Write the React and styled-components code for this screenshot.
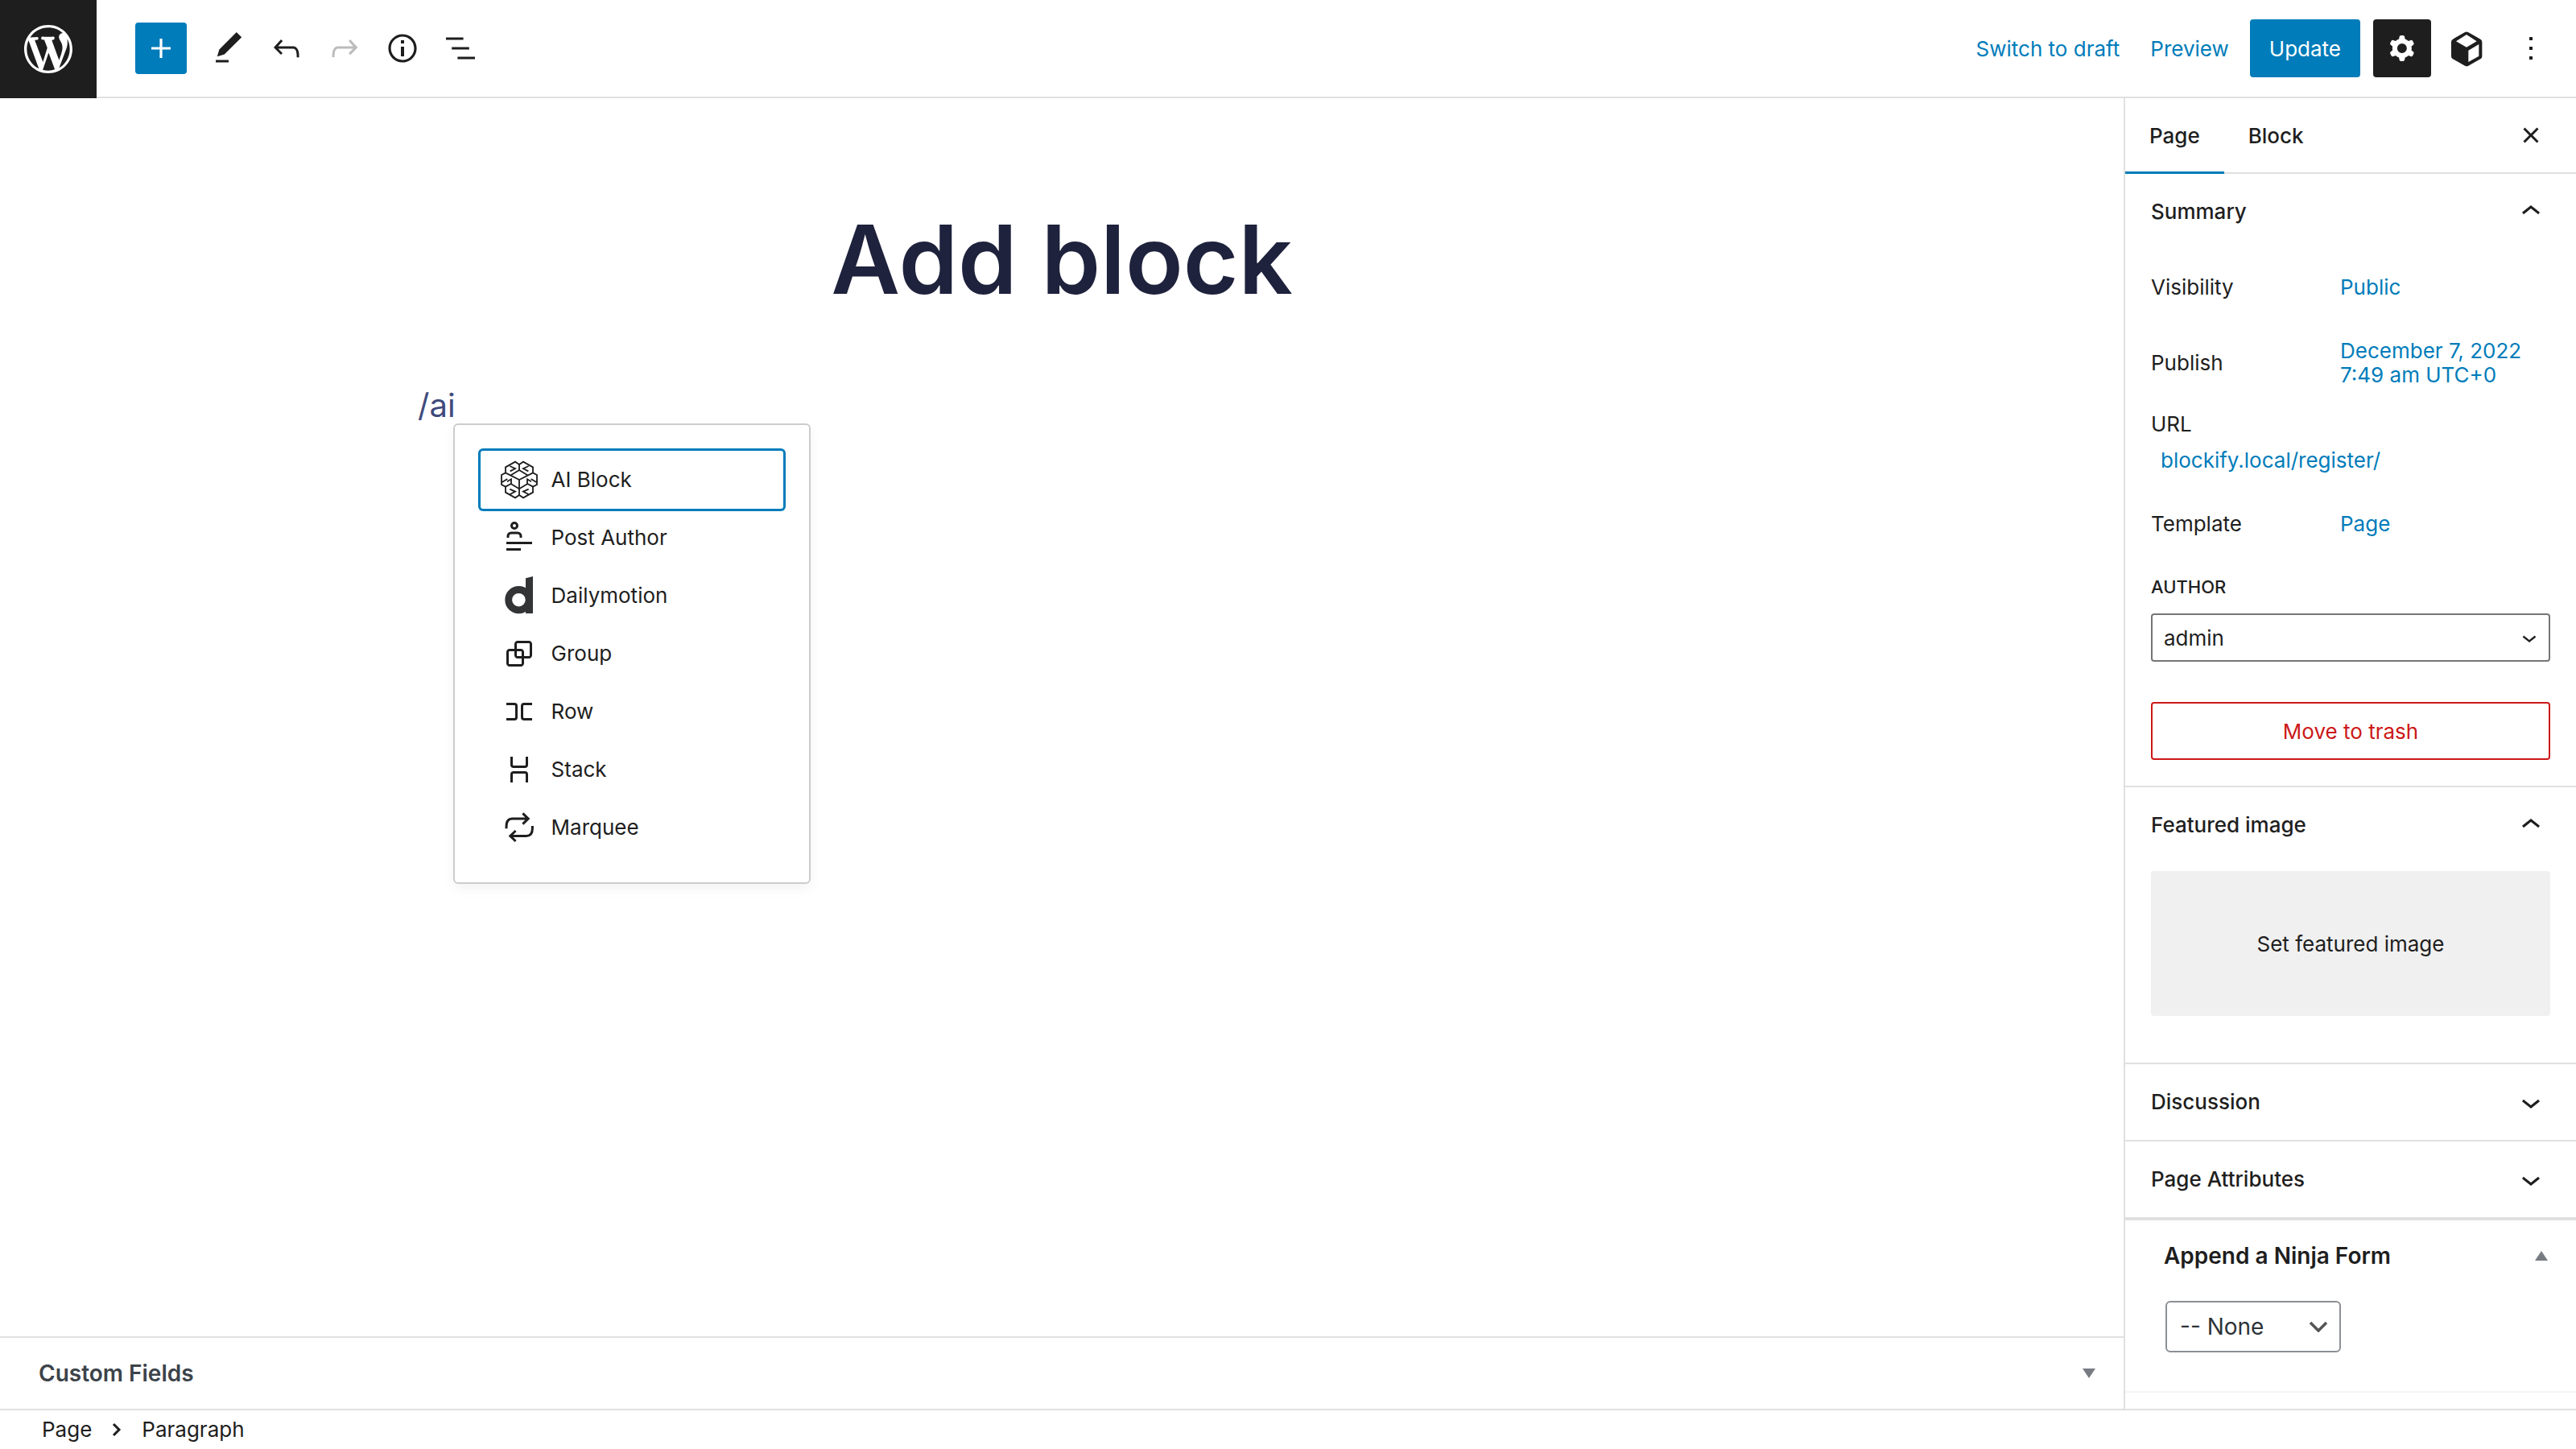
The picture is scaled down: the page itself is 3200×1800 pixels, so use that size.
import React from "react";
import styled, { createGlobalStyle } from "styled-components";

const blue = "#007cba";
const ink = "#1e1e1e";
const line = "#e0e0e0";

const GlobalStyle = createGlobalStyle`
  *, *::before, *::after { box-sizing: border-box; }
  body {
    margin: 0;
    background: #fff;
    color: ${ink};
    font: 400 26px/30px Inter, "Liberation Sans", sans-serif;
  }
  button, select { font: inherit; color: inherit; margin: 0; }
  button { border: 0; padding: 0; background: none; cursor: pointer; }
  a { color: ${blue}; text-decoration: none; }
  h1, h2, p, ul { margin: 0; padding: 0; }
  svg { display: block; flex: none; fill: currentColor; }
`;

const Page = styled.div`
  display: flex;
  flex-direction: column;
  min-height: 100vh;
`;

const Header = styled.header`
  display: flex;
  align-items: center;
  justify-content: space-between;
  height: 122px;
  padding-right: 20px;
  border-bottom: 2px solid ${line};
`;

const Group = styled.div`
  display: flex;
  align-items: center;
  gap: ${(p) => p.$gap || 0}px;
`;

const SiteLink = styled.a`
  display: flex;
  align-items: center;
  justify-content: center;
  width: 120px;
  height: 122px;
  margin-bottom: -2px;
  margin-right: 48px;
  background: ${ink};
  color: #fff;
`;

const ToolButton = styled.button`
  display: flex;
  align-items: center;
  justify-content: center;
  width: 72px;
  height: 72px;
  border-radius: 4px;
  background: ${(p) => (p.$pressed ? ink : "transparent")};
  color: ${(p) => (p.$pressed ? "#fff" : p.disabled ? "#bcbcbc" : ink)};
`;

const AddButton = styled.button`
  display: flex;
  align-items: center;
  justify-content: center;
  width: 64px;
  height: 64px;
  margin-right: 16px;
  border-radius: 4px;
  background: ${blue};
  color: #fff;
`;

const TextButton = styled.button`
  height: 72px;
  padding-top: 2px;
  color: ${blue};
`;

const UpdateButton = styled.button`
  height: 72px;
  margin: 0 8px 0 -12px;
  padding: 2px 24px 0;
  border-radius: 4px;
  background: ${blue};
  color: #fff;
`;

const Body = styled.div`
  flex: 1;
  display: grid;
  grid-template-columns: minmax(0, 1fr) 562px;
`;

const Main = styled.main`
  display: flex;
  flex-direction: column;
`;

const Canvas = styled.div`
  flex: 1;
  width: 100%;
  max-width: 1600px;
  margin: 0 auto;
  padding-top: 128px;
`;

const Title = styled.h1`
  margin-bottom: 78px;
  color: #1e223c;
  font-size: 118px;
  font-weight: 600;
  line-height: 144px;
  text-align: center;
`;

const Paragraph = styled.p`
  color: #3f4a7d;
  font-size: 40px;
  line-height: 64px;
`;

const Caret = styled.span`
  position: relative;
  display: inline-block;
`;

const Menu = styled.ul`
  position: absolute;
  top: 54px;
  left: 100%;
  width: 444px;
  margin-left: -3px;
  padding: 32px;
  border: 2px solid #ccc;
  border-radius: 6px;
  background: #fff;
  box-shadow: 0 6px 16px rgba(0, 0, 0, 0.05);
  color: ${ink};
  font-size: 26px;
  line-height: 30px;
  list-style: none;
`;

const MenuButton = styled.button`
  display: flex;
  align-items: center;
  gap: 16px;
  width: 100%;
  height: 72px;
  padding: 0 24px;
  border-radius: 3px;
  box-shadow: ${(p) => (p.$selected ? `0 0 0 3px ${blue}` : "none")};
`;

const BottomBox = styled.section`
  border-top: 2px solid ${line};
`;

const BoxHeader = styled.button`
  display: flex;
  align-items: center;
  justify-content: space-between;
  width: 100%;
  height: 88px;
  padding: 0 35px 0 48px;
  color: ${(p) => (p.$muted ? "#3c434a" : ink)};
  font-size: 28px;
  font-weight: 600;
  line-height: 34px;

  svg { color: #787c82; }
`;

const Sidebar = styled.aside`
  border-left: 2px solid ${line};
`;

const Tabs = styled.div`
  display: flex;
  height: 94px;
  padding-right: 20px;
  border-bottom: 2px solid ${line};
`;

const Tab = styled.button`
  height: 94px;
  padding: 0 30px;
  font-weight: 500;
  box-shadow: ${(p) => (p.$active ? `inset 0 -3px 0 ${blue}` : "none")};
`;

const CloseButton = styled.button`
  display: flex;
  align-items: center;
  justify-content: center;
  width: 72px;
  margin-left: auto;
`;

const Panel = styled.section`
  & + & { border-top: 2px solid ${line}; }
`;

const PanelHeader = styled.button`
  display: flex;
  align-items: center;
  justify-content: space-between;
  width: 100%;
  height: 94px;
  padding: 0 32px;
  font-weight: 500;
`;

const PanelBody = styled.div`
  padding: 10px 32px ${(p) => p.$bottom}px;
`;

const Row = styled.div`
  display: grid;
  grid-template-columns: 235px 1fr;
  align-items: center;
  min-height: 72px;
  padding: 13px 0 11px;
  margin-bottom: ${(p) => p.$after || 0}px;
`;

const LinkButton = styled.button`
  color: ${blue};
  text-align: left;
  line-height: 30px;
`;

const UrlRow = styled.div`
  margin: 20px 0 12px;
`;

const UrlLink = styled.a`
  display: block;
  padding: 15px 12px;
`;

const Label = styled.label`
  display: block;
  margin-bottom: 20px;
  font-size: 22px;
  font-weight: 500;
  line-height: 26px;
  text-transform: uppercase;
`;

const SelectBox = styled.div`
  position: relative;
  width: ${(p) => p.$width || "100%"};

  svg {
    position: absolute;
    top: 50%;
    right: ${(p) => p.$inset}px;
    transform: translateY(-50%);
    pointer-events: none;
  }
`;

const AuthorSelect = styled.select`
  appearance: none;
  width: 100%;
  height: 60px;
  padding: 2px 14px 0;
  border: 2px solid #757575;
  border-radius: 4px;
  background: #fff;
`;

const FormSelect = styled.select`
  appearance: none;
  width: 100%;
  height: 64px;
  padding: 0 16px;
  border: 2px solid #8c8f94;
  border-radius: 6px;
  background: #fff;
  color: #2c3338;
  font-size: 28px;
`;

const TrashButton = styled.button`
  width: 100%;
  height: 72px;
  margin-top: 50px;
  padding-top: 2px;
  border: 2px solid #cc1818;
  border-radius: 4px;
  color: #cc1818;
`;

const FeaturedButton = styled.button`
  width: 100%;
  height: 180px;
  padding-top: 2px;
  border-radius: 4px;
  background: #f0f0f0;
`;

const SideBox = styled.section`
  border-top: 4px solid ${line};
`;

const SideBoxBody = styled.div`
  padding: 12px 50px 48px;
  border-bottom: 2px solid #f5f5f5;
`;

const Footer = styled.footer`
  display: flex;
  align-items: center;
  gap: 25px;
  height: 50px;
  padding-left: 52px;
  border-top: 2px solid ${line};
`;

function Icon({ d, size = 48, viewBox = "0 0 24 24", rule, children }) {
  return (
    <svg width={size} height={size} viewBox={viewBox} aria-hidden="true">
      {d ? <path d={d} fillRule={rule} clipRule={rule} /> : children}
    </svg>
  );
}

const paths = {
  wordpress:
    "M20 10c0-5.51-4.49-10-10-10C4.48 0 0 4.49 0 10c0 5.52 4.48 10 10 10 5.51 0 10-4.48 10-10zM7.78 15.37L4.37 6.22c.55-.02 1.17-.08 1.17-.08.5-.06.44-1.13-.06-1.11 0 0-1.45.11-2.37.11-.18 0-.37 0-.58-.01C4.12 2.69 6.87 1.11 10 1.11c2.33 0 4.45.87 6.05 2.34-.68-.11-1.65.39-1.65 1.58 0 .74.45 1.36.9 2.1.35.61.55 1.36.55 2.46 0 1.49-1.4 5-1.4 5l-3.03-8.37c.54-.02.82-.17.82-.17.5-.05.44-1.25-.06-1.22 0 0-1.44.12-2.38.12-.87 0-2.33-.12-2.33-.12-.5-.03-.56 1.2-.06 1.22l.92.08 1.26 3.41zM17.41 10c.24-.64.74-1.87.43-4.25.7 1.29 1.05 2.71 1.05 4.25 0 3.29-1.73 6.24-4.4 7.78.97-2.59 1.94-5.2 2.92-7.78zM6.1 18.09C3.12 16.65 1.11 13.53 1.11 10c0-1.3.23-2.48.72-3.59C3.25 10.3 4.67 14.2 6.1 18.09zm4.03-6.63l2.58 6.98c-.86.29-1.76.45-2.71.45-.79 0-1.57-.11-2.29-.33.81-2.38 1.62-4.74 2.42-7.1z",
  plus: "M18 11.2h-5.2V6h-1.6v5.2H6v1.6h5.2V18h1.6v-5.2H18z",
  edit: "M20.1 5.1L16.9 2 6.2 12.7l-1.3 4.4 4.5-1.3L20.1 5.1zM4 20.8h8v-1.5H4v1.5z",
  undo: "M18.3 11.7c-.6-.6-1.4-.9-2.3-.9H6.7l2.9-3.3-1.1-1-4.5 5L8.5 16l1-1-2.7-2.7H16c.5 0 .9.2 1.3.5 1 1 1 3.4 1 4.5v.3h1.5v-.2c0-1.5 0-4.3-1.5-5.7z",
  redo: "M15.6 6.5l-1.1 1 2.9 3.3H8c-.9 0-1.7.3-2.3.9-1.4 1.5-1.4 4.2-1.4 5.6v.2h1.5v-.3c0-1.1 0-3.5 1-4.5.3-.3.7-.5 1.3-.5h9.2L14.5 15l1.1 1.1 4.6-4.6-4.6-5z",
  info: "M12 3.2c-4.8 0-8.8 3.9-8.8 8.8 0 4.8 3.9 8.8 8.8 8.8 4.8 0 8.8-3.9 8.8-8.8 0-4.8-4-8.8-8.8-8.8zm0 16c-4 0-7.2-3.3-7.2-7.2C4.8 8 8 4.8 12 4.8s7.2 3.3 7.2 7.2c0 4-3.2 7.2-7.2 7.2zM11 17h2v-6h-2v6zm0-8h2V7h-2v2z",
  listView:
    "M13.8 5.2H3v1.5h10.8V5.2zm-3.6 12v1.5H21v-1.5H10.2zm7.2-6H6.6v1.5h10.8v-1.5z",
  cog: "M10.289 4.836A1 1 0 0111.275 4h1.306a1 1 0 01.987.836l.244 1.466c.787.26 1.503.679 2.108 1.218l1.393-.522a1 1 0 011.216.437l.653 1.13a1 1 0 01-.23 1.273l-1.148.944a6.025 6.025 0 010 2.435l1.149.946a1 1 0 01.23 1.272l-.653 1.13a1 1 0 01-1.216.437l-1.394-.522c-.605.54-1.32.958-2.108 1.218l-.244 1.466a1 1 0 01-.987.836h-1.306a1 1 0 01-.986-.836l-.244-1.466a5.995 5.995 0 01-2.108-1.218l-1.394.522a1 1 0 01-1.217-.436l-.653-1.131a1 1 0 01.23-1.272l1.149-.946a6.026 6.026 0 010-2.435l-1.148-.944a1 1 0 01-.23-1.272l.653-1.131a1 1 0 011.217-.437l1.393.522a5.994 5.994 0 012.108-1.218l.244-1.466zM14.929 12a3 3 0 11-6 0 3 3 0 016 0z",
  more: "M13 19h-2v-2h2v2zm0-6h-2v-2h2v2zm0-6h-2V5h2v2z",
  close:
    "M12 13.06l3.712 3.713 1.061-1.06L13.061 12l3.712-3.712-1.06-1.06L12 10.938 8.288 7.227l-1.061 1.06L10.939 12l-3.712 3.712 1.06 1.061L12 13.061z",
  up: "M6.5 12.4L12 8l5.5 4.4-.9 1.2L12 10l-4.5 3.6-1-1.2z",
  down: "M17.5 11.6L12 16l-5.5-4.4.9-1.2L12 14l4.5-3.6 1 1.2z",
  author:
    "M10 4.5a1 1 0 11-2 0 1 1 0 012 0zm1.5 0a2.5 2.5 0 11-5 0 2.5 2.5 0 015 0zm2.25 7.5v-1A2.75 2.75 0 0011 8.25H7A2.75 2.75 0 004.25 11v1h1.5v-1c0-.69.56-1.25 1.25-1.25h4c.69 0 1.25.56 1.25 1.25v1h1.5zM4 20h9v-1.5H4V20zm16-4H4v-1.5h16V16z",
  group:
    "M18 4h-7c-1.1 0-2 .9-2 2v3H6c-1.1 0-2 .9-2 2v7c0 1.1.9 2 2 2h7c1.1 0 2-.9 2-2v-3h3c1.1 0 2-.9 2-2V6c0-1.1-.9-2-2-2zm-4.5 14c0 .3-.2.5-.5.5H6c-.3 0-.5-.2-.5-.5v-7c0-.3.2-.5.5-.5h3V13c0 1.1.9 2 2 2h2.5v3zm0-4.5H11c-.3 0-.5-.2-.5-.5v-2.5H13c.3 0 .5.2.5.5v2.5zm5-.5c0 .3-.2.5-.5.5h-3V11c0-1.1-.9-2-2-2h-2.5V6c0-.3.2-.5.5-.5h7c.3 0 .5.2.5.5v7z",
  row: "M4 6.5h5a2 2 0 0 1 2 2v7a2 2 0 0 1-2 2H4V16h5a.5.5 0 0 0 .5-.5v-7A.5.5 0 0 0 9 8H4V6.5Zm16 0h-5a2 2 0 0 0-2 2v7a2 2 0 0 0 2 2h5V16h-5a.5.5 0 0 1-.5-.5v-7A.5.5 0 0 1 15 8h5V6.5Z",
  stack:
    "M17.5 4v5a2 2 0 0 1-2 2h-7a2 2 0 0 1-2-2V4H8v5a.5.5 0 0 0 .5.5h7A.5.5 0 0 0 16 9V4h1.5Zm0 16v-5a2 2 0 0 0-2-2h-7a2 2 0 0 0-2 2v5H8v-5a.5.5 0 0 1 .5-.5h7a.5.5 0 0 1 .5.5v5h1.5Z",
};

const CubeIcon = () => (
  <Icon viewBox="18 18 144 144">
    <path
      fillRule="evenodd"
      d="M84 30q6-3 12 0l46 26q6 4 6 11v53q0 6-5 9l-46 26q-7 3-13 0l-46-26q-5-3-5-9V67q0-7 6-11zM90 39L51 64l39 22 38-22zM97 98v43l39-22V75z"
    />
  </Icon>
);

const brainHalf =
  "M0-57L-15-67-51-47V-26L-66-18V18L-51 26V47L-15 67 0 57M-51-26L0 0M-31-17L0-36M-51 26L-31 15 0 34M-35-51L-15-42-34-32M-64 9L-44-3M-45 7L-30-2V14M-35 35L-15 44-34 54";

const BrainIcon = () => (
  <Icon viewBox="-72 -72 144 144">
    <g fill="none" stroke="currentColor" strokeWidth="5.5">
      <path d={brainHalf} />
      <path d={brainHalf} transform="scale(-1 1)" />
      <path d="M0-58V-36M0 0V58" />
    </g>
  </Icon>
);

const DailymotionIcon = () => (
  <Icon>
    <g fill="#333436">
      <circle cx="11.7" cy="14.6" r="6.35" fill="none" stroke="#333436" strokeWidth="4.4" />
      <path d="M16 1.1L20.5 0v23H16z" />
    </g>
  </Icon>
);

const LoopIcon = () => (
  <Icon>
    <g fill="none" stroke="currentColor" strokeWidth="1.5">
      <path d="M4 12.6V11.500C4 8.500 5 6.500 7.500 6.500H17.300M14.200 3.200L17.600 6.500 14.200 9.800" />
      <path d="M20.200 11V12.500C20.200 15.500 19 17.200 16.500 17.200H6.700M9.800 14L6.400 17.200 9.800 20.500" />
    </g>
  </Icon>
);

const Triangle = ({ up }) => (
  <svg width="16" height="12" viewBox="0 0 16 12" aria-hidden="true">
    <path d={up ? "M8 0L16 12H0z" : "M0 0H16L8 12z"} />
  </svg>
);

const menuItems = [
  ["AI Block", <BrainIcon />],
  ["Post Author", <Icon d={paths.author} rule="evenodd" />],
  ["Dailymotion", <DailymotionIcon />],
  ["Group", <Icon d={paths.group} />],
  ["Row", <Icon d={paths.row} />],
  ["Stack", <Icon d={paths.stack} />],
  ["Marquee", <LoopIcon />],
];

function Collapsible({ title, open, bottom, children }) {
  return (
    <Panel>
      <PanelHeader aria-expanded={!!open}>
        {title}
        <Icon d={open ? paths.up : paths.down} />
      </PanelHeader>
      {open && <PanelBody $bottom={bottom}>{children}</PanelBody>}
    </Panel>
  );
}

export default function App() {
  return (
    <>
      <GlobalStyle />
      <Page>
        <Header>
          <Group>
            <SiteLink href="#" aria-label="View Pages">
              <Icon d={paths.wordpress} size={72} viewBox="-2 -2 24 24" />
            </SiteLink>
            <AddButton aria-label="Toggle block inserter">
              <Icon d={paths.plus} />
            </AddButton>
            <ToolButton aria-label="Tools"><Icon d={paths.edit} /></ToolButton>
            <ToolButton aria-label="Undo"><Icon d={paths.undo} /></ToolButton>
            <ToolButton aria-label="Redo" disabled><Icon d={paths.redo} /></ToolButton>
            <ToolButton aria-label="Details"><Icon d={paths.info} /></ToolButton>
            <ToolButton aria-label="List View"><Icon d={paths.listView} /></ToolButton>
          </Group>
          <Group $gap={8}>
            <Group $gap={38}>
              <TextButton>Switch to draft</TextButton>
              <TextButton>Preview</TextButton>
              <UpdateButton>Update</UpdateButton>
            </Group>
            <ToolButton aria-label="Settings" $pressed><Icon d={paths.cog} rule="evenodd" /></ToolButton>
            <ToolButton aria-label="Blockify"><CubeIcon /></ToolButton>
            <ToolButton aria-label="Options"><Icon d={paths.more} /></ToolButton>
          </Group>
        </Header>

        <Body>
          <Main>
            <Canvas>
              <Title>Add block</Title>
              <Paragraph>
                <Caret>
                  /ai
                  <Menu>
                    {menuItems.map(([name, icon], i) => (
                      <li key={name}>
                        <MenuButton $selected={i === 0}>
                          {icon}
                          {name}
                        </MenuButton>
                      </li>
                    ))}
                  </Menu>
                </Caret>
              </Paragraph>
            </Canvas>
            <BottomBox>
              <BoxHeader $muted aria-expanded="false">
                Custom Fields
                <Triangle />
              </BoxHeader>
            </BottomBox>
          </Main>

          <Sidebar>
            <Tabs>
              <Tab $active>Page</Tab>
              <Tab>Block</Tab>
              <CloseButton aria-label="Close settings">
                <Icon d={paths.close} />
              </CloseButton>
            </Tabs>
            <Collapsible title="Summary" open bottom={32}>
              <Row $after={16}>
                <span>Visibility</span>
                <LinkButton>Public</LinkButton>
              </Row>
              <Row>
                <span>Publish</span>
                <LinkButton>
                  December 7, 2022
                  <br />
                  7:49 am UTC+0
                </LinkButton>
              </Row>
              <UrlRow>
                URL
                <UrlLink href="#">blockify.local/register/</UrlLink>
              </UrlRow>
              <Row $after={30}>
                <span>Template</span>
                <LinkButton>Page</LinkButton>
              </Row>
              <Label htmlFor="author">Author</Label>
              <SelectBox $inset={8}>
                <AuthorSelect id="author" defaultValue="admin">
                  <option>admin</option>
                </AuthorSelect>
                <Icon d={paths.down} size={36} />
              </SelectBox>
              <TrashButton>Move to trash</TrashButton>
            </Collapsible>
            <Collapsible title="Featured image" open bottom={58}>
              <FeaturedButton>Set featured image</FeaturedButton>
            </Collapsible>
            <Collapsible title="Discussion" />
            <Collapsible title="Page Attributes" />
            <SideBox>
              <BoxHeader aria-expanded="true">
                Append a Ninja Form
                <Triangle up />
              </BoxHeader>
              <SideBoxBody>
                <SelectBox $width="218px" $inset={16}>
                  <FormSelect aria-label="Append a Ninja Form" defaultValue="-- None">
                    <option>-- None</option>
                  </FormSelect>
                  <svg width="24" height="14" viewBox="0 0 24 14" aria-hidden="true">
                    <path d="M2 2L12 12 22 2" fill="none" stroke="#555" strokeWidth="3.500" />
                  </svg>
                </SelectBox>
              </SideBoxBody>
            </SideBox>
          </Sidebar>
        </Body>

        <Footer>
          <span>Page</span>
          <svg width="12" height="18" viewBox="0 0 12 18" aria-hidden="true">
            <path d="M2 2L9 9 2 16" fill="none" stroke="currentColor" strokeWidth="3" />
          </svg>
          <span>Paragraph</span>
        </Footer>
      </Page>
    </>
  );
}
